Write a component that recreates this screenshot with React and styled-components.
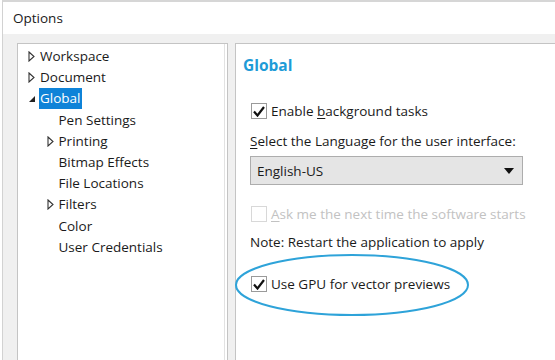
import React from "react";
import styled, { createGlobalStyle } from "styled-components";

const GlobalStyle = createGlobalStyle`
  html, body { margin: 0; padding: 0; background: #fff; }
  body { font-family: "Open Sans", "Noto Sans", sans-serif; color: #1a1a1a; }
  * { box-sizing: border-box; }
`;

const Window = styled.div`
  width: 555px;
  height: 360px;
  margin-left: 2px;
  border-left: 1px solid #d2d2d2;
  border-top: 2px solid #d6d6d6;
  display: flex;
  flex-direction: column;
  overflow: hidden;
`;

const TitleBar = styled.div`
  height: 32px;
  padding-left: 10px;
  display: flex;
  align-items: center;
  font-size: 13.5px;
  background: #fff;
`;

const Body = styled.div`
  flex: 1;
  background: #f0f0f0;
  padding: 9px 0 0 14px;
  display: flex;
  gap: 7px;
  min-height: 0;
`;

const TreePanel = styled.div`
  width: 211px;
  background: #fff;
  border: 1px solid #c4c4c4;
  border-bottom: none;
  box-shadow: inset -2px 0 0 #fff, inset -3px 0 0 #e2e2e2;
  padding: 2px 0 0 10px;
`;

const Row = styled.div`
  height: 21.2px;
  display: flex;
  align-items: center;
  padding-left: ${(p) => p.$level * 18.5}px;
  font-size: 13.5px;
`;

const Arrow = styled.span`
  width: 11px;
  display: flex;
  align-items: center;
`;

const Label = styled.span`
  padding: 1px 1px 2px;
  background: ${(p) => (p.$selected ? "#0f83d8" : "transparent")};
  color: ${(p) => (p.$selected ? "#fff" : "#1a1a1a")};
`;

const SettingsPanel = styled.div`
  flex: 1;
  background: #fff;
  border: 1px solid #c4c4c4;
  border-right: none;
  border-bottom: none;
  padding: 10px 0 0 7px;
  position: relative;
`;

const Heading = styled.div`
  font-size: 15.5px;
  font-weight: 700;
  color: #1e9bd7;
  height: 22px;
`;

const Content = styled.div`
  padding-left: 8px;
  display: flex;
  flex-direction: column;
`;

const CheckRow = styled.div`
  display: flex;
  align-items: center;
  gap: 4px;
  font-size: 13.5px;
  color: ${(p) => (p.$disabled ? "#c2c2c2" : "#1a1a1a")};
  margin-top: ${(p) => p.$top}px;
  height: 18px;
`;

const Box = styled.span`
  width: 16px;
  height: 16px;
  border: 1px solid ${(p) => (p.$disabled ? "#d8d8d8" : "#9a9a9a")};
  background: #fff;
  display: flex;
  align-items: center;
  justify-content: center;
`;

const Text = styled.div`
  font-size: 13.5px;
  margin-top: ${(p) => p.$top}px;
  margin-left: -1px;
`;

const Select = styled.div`
  width: 273px;
  height: 29px;
  margin-top: 6px;
  margin-left: -1px;
  background: #e5e5e5;
  border: 1px solid #adadad;
  display: flex;
  align-items: center;
  justify-content: space-between;
  padding: 0 8px 0 6px;
  font-size: 13.5px;
`;

const U = styled.span`
  text-decoration: underline;
  text-underline-offset: 2px;
`;

const Highlight = styled.svg`
  position: absolute;
  left: -2px;
  top: 208px;
`;

const Check = () => (
  <svg width="12" height="11" viewBox="0 0 12 11">
    <path d="M1 5.5 L4.5 9.5 L11 1" fill="none" stroke="#111" strokeWidth="2.2" />
  </svg>
);

const OpenArrow = () => (
  <svg width="7" height="11" viewBox="0 0 7 11">
    <path d="M1 1 L6 5.5 L1 10 Z" fill="none" stroke="#333" strokeWidth="1.1" />
  </svg>
);

const ExpandedArrow = () => (
  <svg width="8" height="8" viewBox="0 0 8 8">
    <path d="M7 1 L7 7 L1 7 Z" fill="#222" />
  </svg>
);

const tree = [
  { label: "Workspace", level: 0, arrow: "open" },
  { label: "Document", level: 0, arrow: "open" },
  { label: "Global", level: 0, arrow: "expanded", selected: true },
  { label: "Pen Settings", level: 1 },
  { label: "Printing", level: 1, arrow: "open" },
  { label: "Bitmap Effects", level: 1 },
  { label: "File Locations", level: 1 },
  { label: "Filters", level: 1, arrow: "open" },
  { label: "Color", level: 1 },
  { label: "User Credentials", level: 1 },
];

export default function App() {
  return (
    <>
      <GlobalStyle />
      <Window>
        <TitleBar>Options</TitleBar>
        <Body>
          <TreePanel>
            {tree.map((item) => (
              <Row key={item.label} $level={item.level}>
                <Arrow>
                  {item.arrow === "open" && <OpenArrow />}
                  {item.arrow === "expanded" && <ExpandedArrow />}
                </Arrow>
                <Label $selected={item.selected}>{item.label}</Label>
              </Row>
            ))}
          </TreePanel>
          <SettingsPanel>
            <Heading>Global</Heading>
            <Content>
              <CheckRow $top={26}>
                <Box><Check /></Box>
                <span>Enable <U>b</U>ackground tasks</span>
              </CheckRow>
              <Text $top={12}><U>S</U>elect the Language for the user interface:</Text>
              <Select>
                <span>English-US</span>
                <svg width="10" height="6" viewBox="0 0 10 6">
                  <path d="M0 0 L10 0 L5 6 Z" fill="#111" />
                </svg>
              </Select>
              <CheckRow $top={20} $disabled>
                <Box $disabled />
                <span><U>A</U>sk me the next time the software starts</span>
              </CheckRow>
              <Text $top={10}>Note: Restart the application to apply</Text>
              <CheckRow $top={24}>
                <Box><Check /></Box>
                <span>Use GPU for vector previews</span>
              </CheckRow>
            </Content>
            <Highlight width="236" height="66" viewBox="0 0 236 66">
              <ellipse cx="118" cy="33" rx="116" ry="30" fill="none" stroke="#2ea3d9" strokeWidth="2" />
            </Highlight>
          </SettingsPanel>
        </Body>
      </Window>
    </>
  );
}
